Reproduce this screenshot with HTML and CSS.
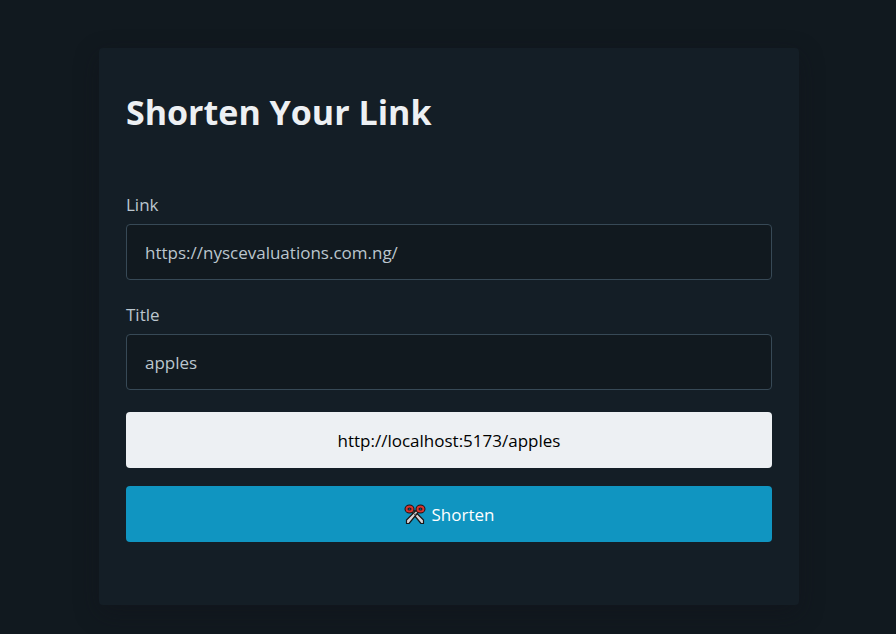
FILE: index.html
```html
<!DOCTYPE html>
<html lang="en">
<head>
<meta charset="utf-8">
<meta name="viewport" content="width=device-width, initial-scale=1">
<title>Shorten Your Link</title>
<link rel="stylesheet" href="styles.css">
</head>
<body>
<main class="container">
  <article class="card">
    <h1 class="title">Shorten Your Link</h1>
    <form class="form">
      <label class="label" for="link">Link</label>
      <input class="field" id="link" type="text" value="https://nyscevaluations.com.ng/">
      <label class="label" for="title">Title</label>
      <input class="field" id="title" type="text" value="apples">
      <button class="button contrast" type="button">http://localhost:5173/apples</button>
      <button class="button primary" type="submit">
        <svg class="icon" viewBox="0 0 22 22" aria-hidden="true">
          <g fill="none" stroke="#1a1214" stroke-width="4"><ellipse cx="5.500" cy="6" rx="3" ry="2.500"/><ellipse cx="16.500" cy="6" rx="3" ry="2.500"/></g>
          <g fill="#d9d4d6" stroke="#1a1616" stroke-width="1.200" stroke-linejoin="round">
            <path d="M19.500 20.500V17L10 7.500 8 9.500 17 20.500Z"/>
            <path d="M2.500 20.500V17L12 7.500 14 9.500 5 20.500Z"/>
          </g>
          <g fill="none" stroke="#d5352f" stroke-width="2"><ellipse cx="5.500" cy="6" rx="3" ry="2.500"/><ellipse cx="16.500" cy="6" rx="3" ry="2.500"/></g>
          <circle cx="11" cy="11.500" r="1" fill="#555"/>
        </svg>
        <span>Shorten</span>
      </button>
    </form>
  </article>
</main>
</body>
</html>
```
FILE: styles.css
```css
* { box-sizing: border-box; }
body {
  margin: 0;
  padding-left: 2px;
  min-height: 100vh;
  background: #11191f;
  color: #bbc6ce;
  font: 17px/27px "Open Sans", "Noto Sans", sans-serif;
}
.container { max-width: 700px; margin: 0 auto; padding: 48px 0 29px; }
.card {
  padding: 43px 27px 63px;
  border-radius: 4px;
  background: #141e26;
  box-shadow: 0 8px 24px rgba(18, 18, 26, 0.4);
}
.title { margin: 0 0 57px; color: #edf0f3; font-size: 34px; line-height: 43px; font-weight: 700; }
.form { display: flex; flex-direction: column; }
.label { margin-bottom: 6px; }
.field, .button { width: 100%; height: 56px; border-radius: 4px; font: inherit; }
.field { margin: 0 0 21px; padding: 0 18px; border: 1px solid #374956; background: #11191f; color: #bbc6ce; }
.button { display: flex; align-items: center; justify-content: center; gap: 6px; border: 0; }
.contrast { margin: 1px 0 18px; background: #edf0f3; color: #000; }
.primary { background: #1095c1; color: #fff; }
.icon { width: 22px; height: 22px; }
```
